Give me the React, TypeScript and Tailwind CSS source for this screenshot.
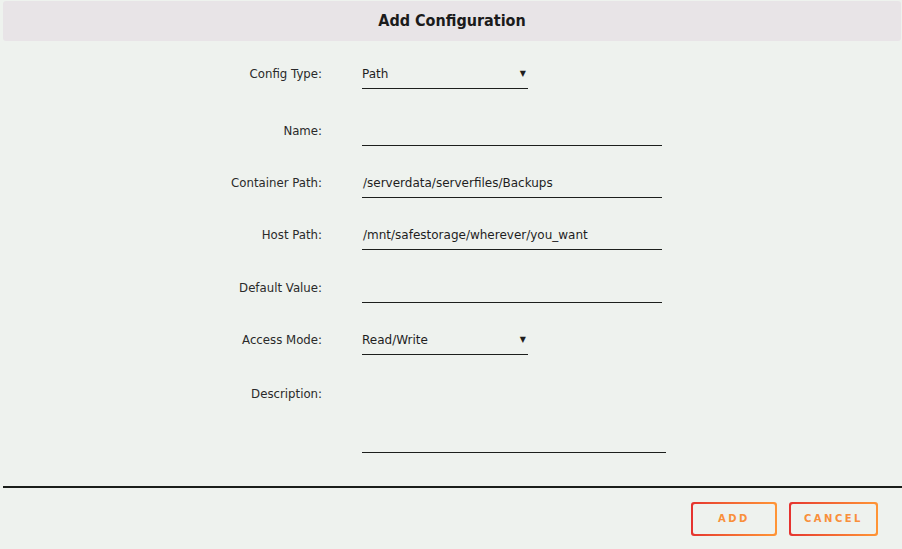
import React from "react";

const font = { fontFamily: '"DejaVu Sans", sans-serif' };

function Label({ children, top }: { children: React.ReactNode; top?: boolean }) {
  return (
    <div
      className={`w-[322px] shrink-0 text-right text-[11.75px] text-[#2a2a2a] ${top ? "pt-[8px]" : "pt-[2px]"}`}
    >
      {children}
    </div>
  );
}

function TextRow({ label, value, mt }: { label: string; value?: string; mt: string }) {
  return (
    <div className={`flex items-center ${mt}`}>
      <Label>{label}</Label>
      <div className="ml-[40px] w-[300px] h-[30px] border-b border-[#1c1f1c] flex items-center pl-[1px] pt-[1px] text-[12px] text-[#1e1e1e]">
        {value}
      </div>
    </div>
  );
}

function SelectRow({ label, value, mt }: { label: string; value: string; mt: string }) {
  return (
    <div className={`flex items-center ${mt}`}>
      <Label>{label}</Label>
      <div className="ml-[40px] w-[166px] h-[30px] border-b border-[#1c1f1c] flex items-center justify-between pt-[1px] text-[12px] text-[#1e1e1e]">
        <span>{value}</span>
        <span className="text-[8px] mr-[2px] leading-none">▼</span>
      </div>
    </div>
  );
}

function GradButton({ children, w }: { children: React.ReactNode; w: string }) {
  return (
    <div className={`${w} h-[34px] rounded-[3px] p-[2px] bg-gradient-to-r from-[#e5322f] to-[#ff9535]`}>
      <div className="w-full h-full rounded-[2px] bg-[#eef2ee] flex items-center justify-center text-[10px] font-bold tracking-[2.5px] text-[#f98f3a]">
        {children}
      </div>
    </div>
  );
}

export default function App() {
  return (
    <div className="w-[902px] h-[549px] bg-[#eef2ee] overflow-hidden" style={font}>
      <div className="ml-[3px] mr-[1px] mt-[1px] h-[40px] bg-[#e8e4e7] rounded-[3px] flex items-center justify-center">
        <span
          className="text-[16px] font-bold text-[#1b1b1b]"
          style={{ fontFamily: '"DejaVu Sans Condensed", "DejaVu Sans", sans-serif' }}
        >
          Add Configuration
        </span>
      </div>
      <div className="pt-[18px]">
        <SelectRow label="Config Type:" value="Path" mt="mt-0" />
        <TextRow label="Name:" mt="mt-[27px]" />
        <TextRow label="Container Path:" value="/serverdata/serverfiles/Backups" mt="mt-[22px]" />
        <TextRow label="Host Path:" value="/mnt/safestorage/wherever/you_want" mt="mt-[22px]" />
        <TextRow label="Default Value:" mt="mt-[23px]" />
        <SelectRow label="Access Mode:" value="Read/Write" mt="mt-[22px]" />
        <div className="flex items-start mt-[23px]">
          <Label top>Description:</Label>
          <div className="ml-[40px] w-[304px] h-[75px] border-b-[1.5px] border-[#1c1f1c]" />
        </div>
      </div>
      <div className="ml-[3px] mt-[33px] h-[1.5px] bg-[#1a1e1a]" />
      <div className="flex justify-end gap-[12px] pr-[24px] mt-[14px]">
        <GradButton w="w-[86px]">ADD</GradButton>
        <GradButton w="w-[89px]">CANCEL</GradButton>
      </div>
    </div>
  );
}
